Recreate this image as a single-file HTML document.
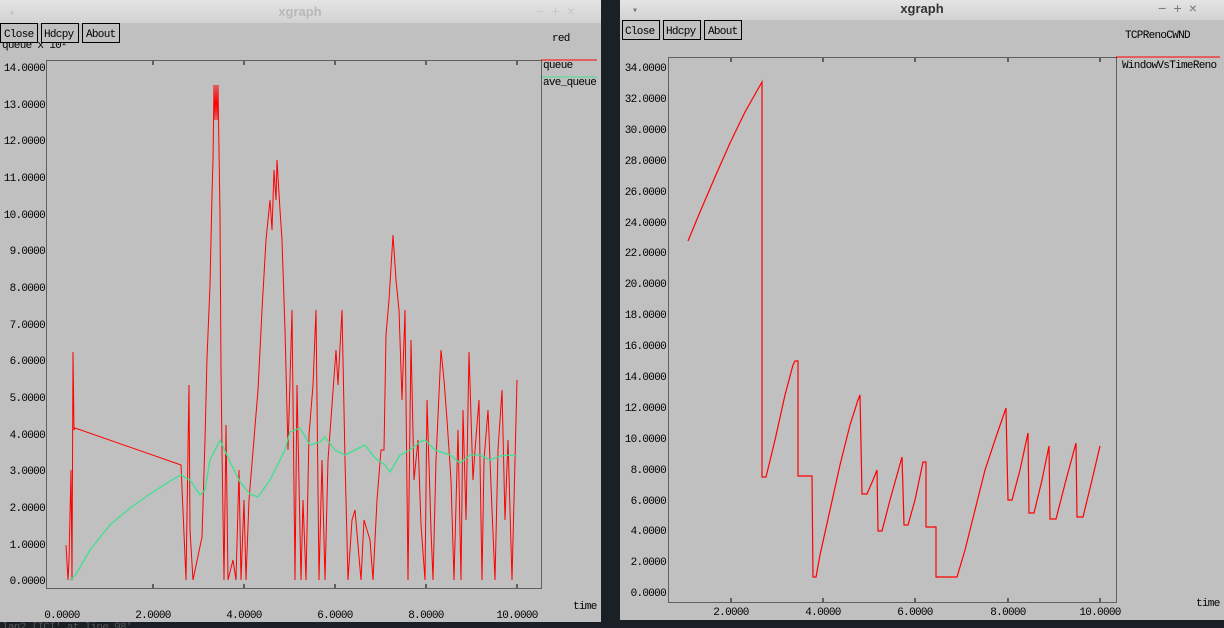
<!DOCTYPE html>
<html><head><meta charset="utf-8"><style>
html,body{margin:0;padding:0;width:1224px;height:628px;overflow:hidden;background:#1b2027}
svg{display:block}
text{font-family:"Liberation Mono","DejaVu Sans Mono",monospace;font-size:11px;letter-spacing:-0.7px;fill:#000}
.t{font-family:"Liberation Sans","DejaVu Sans",sans-serif;font-size:13px;font-weight:bold;letter-spacing:0}
</style></head><body>
<svg width="1224" height="628" viewBox="0 0 1224 628" xmlns="http://www.w3.org/2000/svg">
<defs>
<linearGradient id="tb" x1="0" y1="0" x2="0" y2="1"><stop offset="0" stop-color="#e4e4e4"/><stop offset="1" stop-color="#d2d2d2"/></linearGradient>
</defs>
<!-- LEFT WINDOW -->
<rect x="0" y="0" width="601" height="23" fill="url(#tb)"/>
<text x="300" y="16" class="t" text-anchor="middle" style="fill:#b8b8b8">xgraph</text>
<text x="9" y="16" style="fill:#c0c0c0;font-size:10px">▾</text>
<text x="536" y="16" style="fill:#c8c8c8;font-size:14px">−  +  ×</text>
<rect x="0" y="23" width="601" height="599" fill="#c0c0c0"/>
<text x="2" y="48">queue x 10²</text>
<g fill="#c0c0c0" stroke="#000" stroke-width="1">
<rect x="0.5" y="23.5" width="37" height="19"/><rect x="41.5" y="23.5" width="37" height="19"/><rect x="82.5" y="23.5" width="37" height="19"/>
</g>
<text x="4" y="37">Close</text><text x="44" y="37">Hdcpy</text><text x="86" y="37">About</text>
<text x="552" y="41">red</text>
<rect x="46.5" y="60.5" width="495" height="528" fill="none" stroke="#000" stroke-dasharray="1,1"/>
<line x1="541" y1="60" x2="597" y2="60" stroke="#f00"/>
<text x="543" y="68">queue</text>
<line x1="541" y1="77" x2="597" y2="77" stroke="#3fe090"/>
<text x="543" y="85">ave_queue</text>
<g text-anchor="end">
<text x="45" y="71">14.0000</text><text x="45" y="108">13.0000</text><text x="45" y="144">12.0000</text><text x="45" y="181">11.0000</text><text x="45" y="218">10.0000</text><text x="45" y="254">9.0000</text><text x="45" y="291">8.0000</text><text x="45" y="328">7.0000</text><text x="45" y="364">6.0000</text><text x="45" y="401">5.0000</text><text x="45" y="438">4.0000</text><text x="45" y="474">3.0000</text><text x="45" y="511">2.0000</text><text x="45" y="548">1.0000</text><text x="45" y="584">0.0000</text>
</g>
<g text-anchor="middle">
<text x="62" y="618">0.0000</text><text x="153" y="618">2.0000</text><text x="244" y="618">4.0000</text><text x="335" y="618">6.0000</text><text x="426" y="618">8.0000</text><text x="517" y="618">10.0000</text>
</g>
<text x="573" y="609">time</text>
<g stroke="#000" stroke-width="1">
<line x1="153" y1="61" x2="153" y2="65"/><line x1="244" y1="61" x2="244" y2="65"/><line x1="335" y1="61" x2="335" y2="65"/><line x1="426" y1="61" x2="426" y2="65"/><line x1="517" y1="61" x2="517" y2="65"/>
<line x1="153" y1="584" x2="153" y2="588"/><line x1="244" y1="584" x2="244" y2="588"/><line x1="335" y1="584" x2="335" y2="588"/><line x1="426" y1="584" x2="426" y2="588"/><line x1="517" y1="584" x2="517" y2="588"/>
</g>
<polyline fill="none" stroke="#f00" stroke-width="1" points="66,545 68,580 69,560 71,470 72,580 73,352 74,430 75,428 181,465 186,580 189,385 190,530 193,580 202,537 205,440 207,358 210,285 212,195 213,160 214,85 215,120 216,85 217,120 218,85 220,215 221,370 222,450 224,580 226,425 228,580 233,560 236,580 239,470 241,580 244,500 246,580 249,500 258,390 262,310 266,240 270,200 272,230 274,170 276,200 277,160 280,210 282,240 285,330 288,450 292,310 295,580 297,385 301,580 303,500 306,580 309,435 313,385 316,310 319,580 322,460 325,580 328,460 336,350 338,385 342,310 345,460 348,580 352,520 355,510 361,580 364,520 370,540 373,580 377,500 381,450 384,450 386,335 389,300 393,235 396,280 399,310 402,400 405,310 408,580 411,340 414,480 418,440 421,525 425,580 427,400 431,530 433,580 436,460 441,350 444,380 447,420 451,480 454,580 458,430 461,580 463,410 466,520 469,352 473,480 475,450 479,400 482,580 484,460 488,410 492,510 495,580 498,450 502,390 505,520 508,440 512,580 517,380"/>
<polyline fill="none" stroke="#3fe090" stroke-width="1.3" points="70,580 75,576 90,550 110,525 130,508 150,494 170,481 181,475 190,480 200,495 205,490 210,460 220,440 230,462 240,482 250,494 258,497 270,480 285,450 290,432 300,428 310,445 320,442 325,437 335,450 345,455 355,450 365,445 375,458 385,465 390,472 400,455 410,450 420,442 425,440 435,450 450,455 460,463 470,455 480,455 490,460 500,456 510,455 517,456"/>
<rect x="0" y="622" width="601" height="6" fill="#1b2027"/>
<text x="2" y="630" style="fill:#555">lan2 [ICI' at line 98'</text>

<!-- RIGHT WINDOW -->
<rect x="620" y="0" width="604" height="20" fill="url(#tb)"/>
<text x="922" y="13" class="t" text-anchor="middle" style="fill:#333">xgraph</text>
<text x="632" y="13" style="fill:#777;font-size:10px">▾</text>
<text x="1158" y="13" style="fill:#777;font-size:14px">−  +  ×</text>
<rect x="620" y="20" width="604" height="600" fill="#c0c0c0"/>
<g fill="#c0c0c0" stroke="#000" stroke-width="1">
<rect x="622.5" y="20.5" width="37" height="19"/><rect x="663.5" y="20.5" width="37" height="19"/><rect x="704.5" y="20.5" width="37" height="19"/>
</g>
<text x="625" y="34">Close</text><text x="666" y="34">Hdcpy</text><text x="708" y="34">About</text>
<text x="1125" y="38">TCPRenoCWND</text>
<rect x="668.5" y="57.5" width="448" height="545" fill="none" stroke="#000" stroke-dasharray="1,1"/>
<line x1="1116" y1="57" x2="1220" y2="57" stroke="#f00"/>
<text x="1122" y="68">WindowVsTimeReno</text>
<g text-anchor="end">
<text x="666" y="71">34.0000</text><text x="666" y="102">32.0000</text><text x="666" y="133">30.0000</text><text x="666" y="164">28.0000</text><text x="666" y="195">26.0000</text><text x="666" y="226">24.0000</text><text x="666" y="256">22.0000</text><text x="666" y="287">20.0000</text><text x="666" y="318">18.0000</text><text x="666" y="349">16.0000</text><text x="666" y="380">14.0000</text><text x="666" y="411">12.0000</text><text x="666" y="442">10.0000</text><text x="666" y="473">8.0000</text><text x="666" y="504">6.0000</text><text x="666" y="534">4.0000</text><text x="666" y="565">2.0000</text><text x="666" y="596">0.0000</text>
</g>
<g text-anchor="middle">
<text x="731" y="615">2.0000</text><text x="823" y="615">4.0000</text><text x="915" y="615">6.0000</text><text x="1008" y="615">8.0000</text><text x="1100" y="615">10.0000</text>
</g>
<text x="1196" y="606">time</text>
<g stroke="#000" stroke-width="1">
<line x1="731" y1="58" x2="731" y2="62"/><line x1="823" y1="58" x2="823" y2="62"/><line x1="915" y1="58" x2="915" y2="62"/><line x1="1008" y1="58" x2="1008" y2="62"/><line x1="1100" y1="58" x2="1100" y2="62"/>
<line x1="731" y1="598" x2="731" y2="602"/><line x1="823" y1="598" x2="823" y2="602"/><line x1="915" y1="598" x2="915" y2="602"/><line x1="1008" y1="598" x2="1008" y2="602"/><line x1="1100" y1="598" x2="1100" y2="602"/>
</g>
<polyline fill="none" stroke="#f00" stroke-width="1.2" points="688,241 700,212 715,177 730,143 745,112 762,82 762,477 766,477 775,440 785,395 793,365 795,361 798,361 798,476 812,476 813,577 816,577 820,555 830,510 840,465 850,425 858,400 860,395 861,445 862,494 867,494 873,480 877,470 878,531 882,531 890,500 897,475 902,457 903,490 904,525 908,525 915,500 923,462 926,462 926,527 936,527 936,577 957,577 965,550 975,510 985,470 995,440 1006,408 1007,455 1008,500 1012,500 1020,470 1028,433 1029,513 1034,513 1042,480 1049,446 1050,519 1056,519 1066,480 1076,443 1077,517 1083,517 1092,480 1100,446"/>
</svg>
</body></html>
